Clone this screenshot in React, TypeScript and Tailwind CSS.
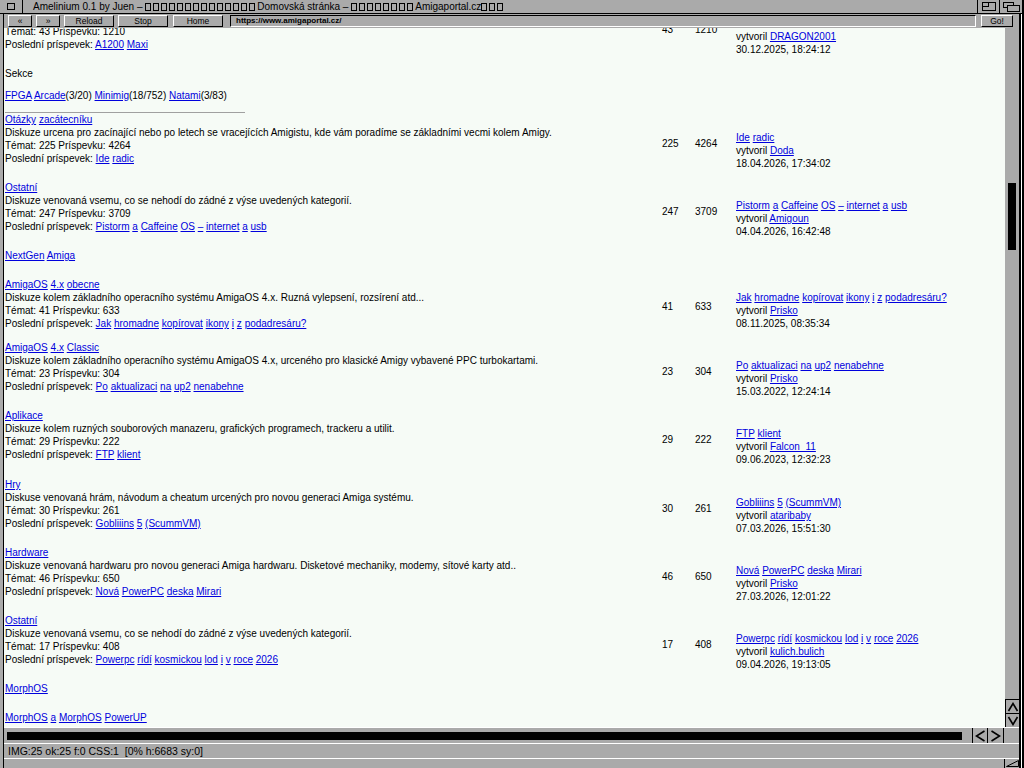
import React from "react";

// Amelinium browser window showing the amigaportal.cz forum index.

const LINK = "text-[#0000dd] underline";

type Forum = {
  title: string;
  desc: string;
  topics: number;
  posts: number;
  last: string;
  user: string;
  date: string;
  tight?: boolean;
  wide?: boolean;
  hideFirst?: boolean;
};

const TOP_ROW: Forum = {
  title: "Amiga Classic",
  desc: "Diskuze kolem klasických Amig.",
  topics: 43,
  posts: 1210,
  last: "A1200 Maxi",
  user: "DRAGON2001",
  date: "30.12.2025, 18:24:12",
  hideFirst: true,
};

const SECTION_A: Forum[] = [
  {
    title: "Otázky zacátecníku",
    desc: "Diskuze urcena pro zacínající nebo po letech se vracejících Amigistu, kde vám poradíme se základními vecmi kolem Amigy.",
    topics: 225,
    posts: 4264,
    last: "Ide radic",
    user: "Doda",
    date: "18.04.2026, 17:34:02",
  },
  {
    title: "Ostatní",
    desc: "Diskuze venovaná vsemu, co se nehodí do zádné z výse uvedených kategorií.",
    topics: 247,
    posts: 3709,
    last: "Pistorm a Caffeine OS – internet a usb",
    user: "Amigoun",
    date: "04.04.2026, 16:42:48",
  },
];

const SECTION_B: Forum[] = [
  {
    title: "AmigaOS 4.x obecne",
    desc: "Diskuze kolem základního operacního systému AmigaOS 4.x. Ruzná vylepsení, rozsírení atd...",
    topics: 41,
    posts: 633,
    last: "Jak hromadne kopírovat ikony i z podadresáru?",
    user: "Prisko",
    date: "08.11.2025, 08:35:34",
    tight: true,
  },
  {
    title: "AmigaOS 4.x Classic",
    desc: "Diskuze kolem základního operacního systému AmigaOS 4.x, urceného pro klasické Amigy vybavené PPC turbokartami.",
    topics: 23,
    posts: 304,
    last: "Po aktualizaci na up2 nenabehne",
    user: "Prisko",
    date: "15.03.2022, 12:24:14",
  },
  {
    title: "Aplikace",
    desc: "Diskuze kolem ruzných souborových manazeru, grafických programech, trackeru a utilit.",
    topics: 29,
    posts: 222,
    last: "FTP klient",
    user: "Falcon_11",
    date: "09.06.2023, 12:32:23",
    wide: true,
  },
  {
    title: "Hry",
    desc: "Diskuse venovaná hrám, návodum a cheatum urcených pro novou generaci Amiga systému.",
    topics: 30,
    posts: 261,
    last: "Gobliiins 5 (ScummVM)",
    user: "ataribaby",
    date: "07.03.2026, 15:51:30",
  },
  {
    title: "Hardware",
    desc: "Diskuze venovaná hardwaru pro novou generaci Amiga hardwaru. Disketové mechaniky, modemy, sítové karty atd..",
    topics: 46,
    posts: 650,
    last: "Nová PowerPC deska Mirari",
    user: "Prisko",
    date: "27.03.2026, 12:01:22",
  },
  {
    title: "Ostatní",
    desc: "Diskuze venovaná vsemu, co se nehodí do zádné z výse uvedených kategorií.",
    topics: 17,
    posts: 408,
    last: "Powerpc rídí kosmickou lod i v roce 2026",
    user: "kulich.bulich",
    date: "09.04.2026, 19:13:05",
  },
];

function Words({ text }: { text: string }) {
  return (
    <>
      {text.split(" ").map((w, i) => (
        <React.Fragment key={i}>
          {i > 0 && " "}
          <a className={LINK}>{w}</a>
        </React.Fragment>
      ))}
    </>
  );
}

function ForumRow({ f }: { f: Forum }) {
  return (
    <div className={f.wide ? "flex mb-[12px] whitespace-nowrap" : "flex mb-[11px] whitespace-nowrap"}>
      <div className="w-[657px] shrink-0">
        <div>
          <Words text={f.title} />
        </div>
        <div>{f.desc}</div>
        <div>
          Témat: {f.topics} Príspevku: {f.posts}
        </div>
        <div>
          Poslední príspevek: <Words text={f.last} />
        </div>
      </div>
      <div className={f.tight ? "w-[33px] shrink-0 pt-[22px]" : "w-[33px] shrink-0 pt-[24px]"}>{f.topics}</div>
      <div className={f.tight ? "w-[41px] shrink-0 pt-[22px]" : "w-[41px] shrink-0 pt-[24px]"}>{f.posts}</div>
      <div className={f.tight ? "pt-[13px]" : "pt-[18px]"}>
        <div className={f.hideFirst ? "invisible" : ""}>
          <Words text={f.last} />
        </div>
        <div>
          vytvoril <a className={LINK}>{f.user}</a>
        </div>
        <div>{f.date}</div>
      </div>
    </div>
  );
}

function Tofu({ n }: { n: number }) {
  return (
    <>
      {Array.from({ length: n }).map((_, i) => (
        <span key={i} className="inline-block w-[6px] h-[8px] border border-black mr-[2px] align-[-1px]" />
      ))}
    </>
  );
}

function Btn({ label, className }: { label: string; className: string }) {
  return (
    <div
      className={`h-[12px] shrink-0 flex items-center justify-center text-[8.5px] leading-none border border-t-white border-l-white border-b-black border-r-black ${className}`}
    >
      {label}
    </div>
  );
}

function TitleBar() {
  return (
    <div className="h-[14px] shrink-0 flex border-b border-black">
      <div className="w-[23px] border-r border-black flex items-center justify-center">
        <div className="w-[8px] h-[7px] border border-black" />
      </div>
      <div className="pl-[10px] flex items-center text-[10px] leading-none whitespace-nowrap">
        Amelinium 0.1 by Juen –&nbsp;
        <Tofu n={14} />
        Domovská stránka –&nbsp;
        <Tofu n={8} />
        Amigaportal.cz
        <Tofu n={3} />
      </div>
      <div className="ml-auto flex">
        <div className="w-[22px] border-l border-black flex items-center justify-center">
          <svg width="14" height="9" viewBox="0 0 14 9">
            <rect x="0.5" y="0.5" width="13" height="8" fill="none" stroke="black" />
            <rect x="0.5" y="0.5" width="6" height="4" fill="none" stroke="black" />
          </svg>
        </div>
        <div className="w-[23px] border-l border-black flex items-center justify-center">
          <svg width="17" height="10" viewBox="0 0 17 10">
            <rect x="0.5" y="0.5" width="10" height="5" fill="#aaaaaa" stroke="black" />
            <rect x="4.5" y="3.5" width="12" height="6" fill="#aaaaaa" stroke="black" />
          </svg>
        </div>
        <div className="w-[2px] bg-black" />
      </div>
    </div>
  );
}

function Toolbar() {
  return (
    <div className="h-[14px] shrink-0 flex items-center pl-[4px] pr-[6px]">
      <Btn label="«" className="w-[24px]" />
      <Btn label="»" className="w-[24px] ml-[4px]" />
      <Btn label="Reload" className="w-[50px] ml-[4px]" />
      <Btn label="Stop" className="w-[50px] ml-[4px]" />
      <Btn label="Home" className="w-[50px] ml-[5px]" />
      <div className="flex-1 ml-[7px] h-[12px] flex items-center pl-[5px] text-[8px] font-bold leading-none border border-t-black border-l-black border-b-white border-r-white">
        https://www.amigaportal.cz/
      </div>
      <Btn label="Go!" className="w-[32px] ml-[5px]" />
    </div>
  );
}

function Content() {
  return (
    <div className="w-[1001px] shrink-0 bg-[#f6fbf6] overflow-hidden pl-[1px] text-[10px] leading-[13px]">
      <div className="mt-[-29px]">
        <ForumRow f={TOP_ROW} />
        <div>Sekce</div>
        <div className="mt-[9px] mb-[10px] whitespace-nowrap">
          <a className={LINK}>FPGA</a> <a className={LINK}>Arcade</a>(3/20) <a className={LINK}>Minimig</a>(18/752){" "}
          <a className={LINK}>Natami</a>(3/83)
        </div>
        <div className="w-[240px] h-[1px] bg-[#a0a0a0]" />
        {SECTION_A.map((f, i) => (
          <ForumRow key={i} f={f} />
        ))}
        <div className="mb-[16px]">
          <Words text="NextGen Amiga" />
        </div>
        {SECTION_B.map((f, i) => (
          <ForumRow key={i} f={f} />
        ))}
        <div className="mb-[16px]">
          <a className={LINK}>MorphOS</a>
        </div>
        <div>
          <Words text="MorphOS a MorphOS PowerUP" />
        </div>
      </div>
    </div>
  );
}

function VScroll() {
  return (
    <div className="w-[14px] shrink-0 flex flex-col bg-[#aaaaaa]">
      <div className="flex-1">
        <div className="ml-[3px] mt-[155px] w-[8px] h-[67px] bg-black" />
      </div>
      <div className="h-[14px] border-t border-l border-black flex items-center justify-center">
        <svg width="12" height="10" viewBox="0 0 12 10">
          <polyline points="1.5,9 6,1.5 10.5,9" fill="none" stroke="black" strokeWidth="1.6" />
        </svg>
      </div>
      <div className="h-[14px] border-t border-l border-black flex items-center justify-center">
        <svg width="12" height="10" viewBox="0 0 12 10">
          <polyline points="1.5,1 6,8.5 10.5,1" fill="none" stroke="black" strokeWidth="1.6" />
        </svg>
      </div>
    </div>
  );
}

function HScroll() {
  return (
    <div className="h-[16px] shrink-0 flex border-t border-white">
      <div className="flex-1 ml-[3px] mr-[10px] mt-[4px] h-[8px] bg-black" />
      <div className="w-[15px] border-l border-black flex items-center justify-center">
        <svg width="11" height="12" viewBox="0 0 11 12">
          <polyline points="9.5,1 1.5,6 9.5,11" fill="none" stroke="black" strokeWidth="1.6" />
        </svg>
      </div>
      <div className="w-[16px] border-l border-black flex items-center justify-center">
        <svg width="11" height="12" viewBox="0 0 11 12">
          <polyline points="1.5,1 9.5,6 1.5,11" fill="none" stroke="black" strokeWidth="1.6" />
        </svg>
      </div>
      <div className="w-[16px] border-l border-black" />
    </div>
  );
}

export default function App() {
  return (
    <div className="w-[1024px] h-[768px] overflow-hidden bg-[#aaaaaa] flex flex-col text-black font-['Liberation_Sans',Arial,sans-serif]">
      <TitleBar />
      <div className="flex flex-1 min-h-0">
        <div className="w-[4px] shrink-0 border-r border-black" />
        <div className="w-[1015px] shrink-0 flex flex-col">
          <Toolbar />
          <div className="flex flex-1 min-h-0">
            <Content />
            <VScroll />
          </div>
          <HScroll />
          <div className="h-[15px] shrink-0 border-t border-white flex items-center pl-[4px] text-[10.5px] leading-none whitespace-nowrap">
            IMG:25 ok:25 f:0 CSS:1&nbsp;&nbsp;[0% h:6683 sy:0]
          </div>
          <div className="h-[10px] shrink-0 border-t border-white flex justify-end">
            <div className="w-[15px] border-l border-black flex items-end justify-center pb-[1px]">
              <svg width="13" height="7" viewBox="0 0 13 7">
                <polygon points="0.5,6.5 12.5,6.5 12.5,0.5" fill="none" stroke="black" />
              </svg>
            </div>
          </div>
        </div>
        <div className="w-[5px] shrink-0 flex">
          <div className="w-[2px] bg-black" />
          <div className="w-[1px] bg-white" />
          <div className="w-[2px] bg-black" />
        </div>
      </div>
    </div>
  );
}
